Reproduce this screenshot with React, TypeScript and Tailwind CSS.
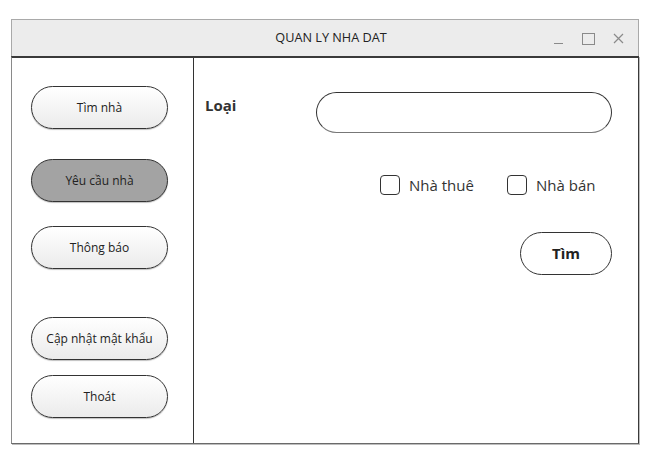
import React from 'react';

const menu = [
  { label: 'Tìm nhà', mt: 'mt-[28px]', active: false },
  { label: 'Yêu cầu nhà', mt: 'mt-[30px]', active: true },
  { label: 'Thông báo', mt: 'mt-[24px]', active: false },
  { label: 'Cập nhật mật khẩu', mt: 'mt-[48px]', active: false },
  { label: 'Thoát', mt: 'mt-[15px]', active: false },
];

function SideButton({ label, mt, active }: { label: string; mt: string; active: boolean }) {
  return (
    <button
      className={
        'ml-[19px] flex h-[43px] w-[137px] items-center justify-center rounded-full border border-[#333] text-[12px] text-[#222] shadow-[0_1px_1px_rgba(0,0,0,0.25)] ' +
        mt +
        (active ? ' bg-[#a3a3a3]' : ' bg-gradient-to-b from-white to-[#ebebeb]')
      }
    >
      {label}
    </button>
  );
}

function Check({ label, w }: { label: string; w: string }) {
  return (
    <label className={'flex items-center gap-[9px] ' + w}>
      <span className="h-[20px] w-[20px] rounded-[4px] border-[1.5px] border-[#333] bg-white" />
      <span className="text-[15px] text-[#333]">{label}</span>
    </label>
  );
}

export default function App() {
  return (
    <div
      className="min-h-screen bg-white pl-[11px] pt-[19px]"
      style={{ fontFamily: '"Open Sans", "Noto Sans", sans-serif' }}
    >
      <div className="flex h-[425px] w-[628px] flex-col">
        {/* title bar */}
        <div className="relative flex h-[37px] items-center justify-center border border-b-0 border-[#a9a9a9] bg-[#ececec] pl-[12px]">
          <span className="text-[12.7px] text-[#222]">QUAN LY NHA DAT</span>
          <div className="absolute right-[14px] top-[13px] flex items-start gap-[18px]">
            <svg width="11" height="12" viewBox="0 0 11 12">
              <line x1="1" y1="10.5" x2="10" y2="10.5" stroke="#8a8a8a" strokeWidth="1" />
            </svg>
            <svg width="13" height="12" viewBox="0 0 13 12">
              <rect x="0.5" y="0.5" width="12" height="11" fill="none" stroke="#8a8a8a" strokeWidth="1" />
            </svg>
            <svg width="11" height="11" viewBox="0 0 11 11">
              <path d="M1 1 L10 10 M10 1 L1 10" stroke="#8a8a8a" strokeWidth="1.2" />
            </svg>
          </div>
        </div>

        {/* body */}
        <div className="flex flex-1 border border-t-2 border-[#3a3a3a] border-b-[#6a6a6a] border-l-[#8a8a8a] shadow-[1px_1px_0_#bdbdbd]">
          <aside className="flex w-[182px] flex-col border-r border-[#333]">
            {menu.map((m) => (
              <SideButton key={m.label} {...m} />
            ))}
          </aside>

          <main className="flex flex-1 flex-col pl-[11px] pr-[26px] pt-[34px]">
            <div className="flex">
              <span className="mt-[2px] w-[111px] text-[15px] font-bold text-[#333]">Loại</span>
              <div className="h-[41px] flex-1 rounded-full border border-[#333] border-b-[#777] bg-white" />
            </div>

            <div className="mt-[41px] flex pl-[175px]">
              <Check label="Nhà thuê" w="w-[127px]" />
              <Check label="Nhà bán" w="" />
            </div>

            <div className="mt-[35px] flex justify-end">
              <button className="h-[43px] w-[92px] rounded-full border border-[#333] bg-white text-[15px] font-bold text-[#222]">
                Tìm
              </button>
            </div>
          </main>
        </div>
      </div>
    </div>
  );
}
